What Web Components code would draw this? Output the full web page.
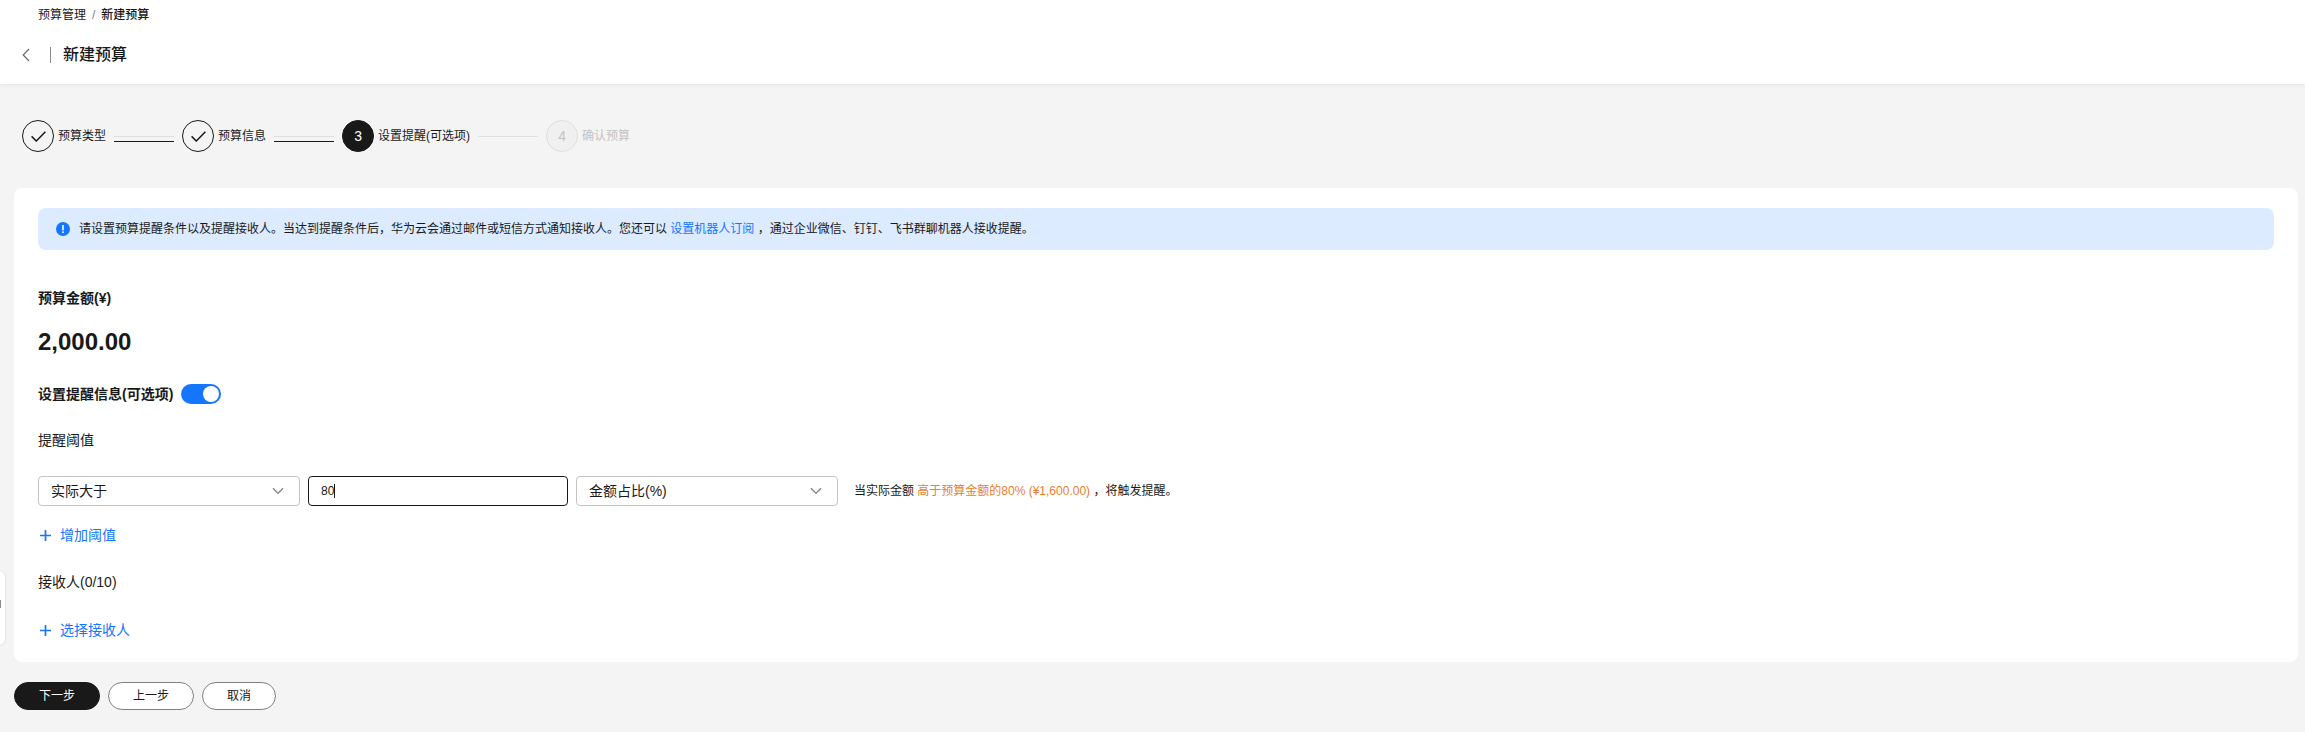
<!DOCTYPE html>
<html lang="zh-CN">
<head>
<meta charset="utf-8">
<title>新建预算</title>
<style>
  html, body { margin: 0; background: #f4f4f4; }
  body {
    font: 12px/20px "Liberation Sans", "Noto Sans CJK SC", sans-serif;
    color: #191919;
    position: relative;
    min-height: 732px;
  }
</style>
</head>
<body>
<page-header crumb="预算管理" title-text="新建预算"></page-header>

<step-bar>
  <step-item state="done" connector="done">预算类型</step-item>
  <step-item state="done" connector="done">预算信息</step-item>
  <step-item state="active" num="3" connector="todo">设置提醒(可选项)</step-item>
  <step-item state="todo" num="4">确认预算</step-item>
</step-bar>

<form-card>
  <info-alert>
    请设置预算提醒条件以及提醒接收人。当达到提醒条件后，华为云会通过邮件或短信方式通知接收人。您还可以 <a-link>设置机器人订阅</a-link> ，通过企业微信、钉钉、飞书群聊机器人接收提醒。
  </info-alert>

  <form-row top="38" strong>预算金额(¥)</form-row>
  <form-row top="18" amount>2,000.00</form-row>
  <form-row top="26" strong>设置提醒信息(可选项)<switch-toggle slot="after"></switch-toggle></form-row>
  <form-row top="26">提醒阈值</form-row>

  <threshold-row>
    <select-box>实际大于</select-box>
    <text-box value="80"></text-box>
    <select-box>金额占比(%)</select-box>
    <span slot="hint">当实际金额 <em style="font-style:normal;color:#e8802f">高于预算金额的80% (¥1,600.00)</em> ，将触发提醒。</span>
  </threshold-row>

  <add-link top="19">增加阈值</add-link>
  <form-row top="27">接收人(0/10)</form-row>
  <add-link top="28">选择接收人</add-link>
</form-card>

<action-bar>
  <ui-btn variant="primary" width="86">下一步</ui-btn>
  <ui-btn width="86">上一步</ui-btn>
  <ui-btn width="74">取消</ui-btn>
</action-bar>

<side-tab></side-tab>

<script>
// kleine helper: shadow root met stijl + markup
function mount(el, html) {
  el.attachShadow({ mode: 'open' });
  el.shadowRoot.innerHTML = html;
}

class PageHeader extends HTMLElement {
  connectedCallback() {
    mount(this, `
      <style>
        :host {
          display: block;
          height: 84px;
          background: #fff;
          box-shadow: 0 1px 4px rgba(0, 0, 0, 0.08);
          box-sizing: border-box;
          padding: 6px 0 0 22px;
        }
        .crumb { height: 18px; line-height: 18px; padding-left: 16px; display: flex; gap: 6px; }
        .crumb i { font-style: normal; color: #808080; }
        .crumb b { font-weight: 500; }
        .title { display: flex; align-items: center; height: 32px; margin-top: 15px; }
        svg { display: block; }
        .sep { width: 1px; height: 16px; background: #8a8a8a; margin: 0 12px 0 20px; }
        h1 { margin: 0; font-size: 16px; line-height: 32px; font-weight: 500; }
      </style>
      <div class="crumb"><span>${this.getAttribute('crumb')}</span><i>/</i><b>${this.getAttribute('title-text')}</b></div>
      <div class="title">
        <svg width="8" height="14" viewBox="0 0 8 14"><path d="M7 1 1.2 7 7 13" fill="none" stroke="#6b6b6b" stroke-width="1.2"/></svg>
        <span class="sep"></span>
        <h1>${this.getAttribute('title-text')}</h1>
      </div>`);
  }
}

class StepBar extends HTMLElement {
  connectedCallback() {
    mount(this, `
      <style>
        :host { display: flex; padding: 36px 0 0 22px; gap: 8px; }
      </style>
      <slot></slot>`);
  }
}

class StepItem extends HTMLElement {
  connectedCallback() {
    const state = this.getAttribute('state');
    const conn = this.getAttribute('connector');
    const mark = state === 'done'
      ? '<svg width="15" height="11" viewBox="0 0 15 11"><path d="M.6 5.4 5.3 10 14.4 .8" fill="none" stroke="#191919" stroke-width="1.5"/></svg>'
      : this.getAttribute('num');
    mount(this, `
      <style>
        :host { display: flex; height: 32px; gap: 8px; }
        .head { display: flex; align-items: center; gap: 4px; }
        .dot {
          width: 32px; height: 32px; box-sizing: border-box;
          border-radius: 50%;
          border: 1px solid #191919;
          display: flex; align-items: center; justify-content: center;
          font-size: 14px;
        }
        :host([state=active]) .dot { background: #191919; color: #fff; }
        :host([state=todo]) .dot { background: #f0f0f0; border-color: #dfdfdf; color: #c3c3c3; }
        :host([state=todo]) .label { color: #c3c3c3; }
        .label { white-space: nowrap; }
        .line { width: 60px; padding-top: 16px; }
        .line::before { content: ""; display: block; height: 1px; background: #dfdfdf; }
        .line.done::after { content: ""; display: block; height: 1px; margin-top: 4px; background: #191919; }
      </style>
      <div class="head"><span class="dot">${mark}</span><span class="label"><slot></slot></span></div>
      ${conn ? `<div class="line ${conn}"></div>` : ''}`);
  }
}

class FormCard extends HTMLElement {
  connectedCallback() {
    mount(this, `
      <style>
        :host {
          display: block;
          margin: 36px 7px 0 14px;
          padding: 20px 24px 22px;
          background: #fff;
          border-radius: 8px;
        }
      </style>
      <slot></slot>`);
  }
}

class InfoAlert extends HTMLElement {
  connectedCallback() {
    mount(this, `
      <style>
        :host {
          display: flex;
          align-items: center;
          height: 42px;
          padding: 0 18px;
          gap: 9px;
          background: #dcebff;
          border-radius: 8px;
        }
        svg { flex: none; }
      </style>
      <svg width="14" height="14" viewBox="0 0 14 14">
        <circle cx="7" cy="7" r="7" fill="#1476ff"/>
        <rect x="6.2" y="3" width="1.6" height="5.4" fill="#fff"/>
        <rect x="6.2" y="9.4" width="1.6" height="1.6" fill="#fff"/>
      </svg>
      <span><slot></slot></span>`);
  }
}

class ALink extends HTMLElement {
  connectedCallback() {
    mount(this, `<style>:host { color: #1476ff; }</style><slot></slot>`);
  }
}

class FormRow extends HTMLElement {
  connectedCallback() {
    mount(this, `
      <style>
        :host { display: flex; align-items: center; gap: 8px; height: 20px; font-size: 14px; margin-top: ${this.getAttribute('top')}px; }
        :host([strong]) { font-weight: 600; }
        :host([amount]) { font-size: 24px; font-weight: 700; height: 32px; line-height: 32px; }
      </style>
      <span><slot></slot></span><slot name="after"></slot>`);
  }
}

class SwitchToggle extends HTMLElement {
  connectedCallback() {
    mount(this, `
      <style>
        :host {
          display: flex; justify-content: flex-end; align-items: center;
          width: 40px; height: 20px; box-sizing: border-box;
          padding-right: 2px;
          background: #1476ff; border-radius: 10px;
        }
        i { width: 16px; height: 16px; border-radius: 50%; background: #fff; }
      </style>
      <i></i>`);
  }
}

class ThresholdRow extends HTMLElement {
  connectedCallback() {
    mount(this, `
      <style>
        :host { display: flex; align-items: center; gap: 8px; margin-top: 26px; }
        .hint { margin-left: 8px; white-space: nowrap; }
      </style>
      <slot></slot>
      <span class="hint"><slot name="hint"></slot></span>`);
  }
}

class SelectBox extends HTMLElement {
  connectedCallback() {
    mount(this, `
      <style>
        :host {
          display: flex; align-items: center; justify-content: space-between;
          width: 262px; height: 30px; box-sizing: border-box;
          padding: 0 15px 0 12px;
          border: 1px solid #c3c3c3; border-radius: 4px;
          background: #fff;
          font-size: 14px;
        }
      </style>
      <span><slot></slot></span>
      <svg width="12" height="8" viewBox="0 0 12 8"><path d="M1 1.2 6 6.4 11 1.2" fill="none" stroke="#808080" stroke-width="1.3"/></svg>`);
  }
}

class TextBox extends HTMLElement {
  connectedCallback() {
    mount(this, `
      <style>
        :host {
          display: flex; align-items: center;
          width: 260px; height: 30px; box-sizing: border-box;
          padding: 0 12px;
          border: 1px solid #191919; border-radius: 4px;
          background: #fff;
        }
        i { width: 1px; height: 14px; background: #191919; }
      </style>
      <span>${this.getAttribute('value')}</span><i></i>`);
  }
}

class AddLink extends HTMLElement {
  connectedCallback() {
    mount(this, `
      <style>
        :host {
          display: flex; align-items: center; gap: 9px;
          height: 20px; padding-left: 2px;
          margin-top: ${this.getAttribute('top')}px;
          color: #1476ff;
          font-size: 14px;
        }
      </style>
      <svg width="11" height="11" viewBox="0 0 11 11"><path d="M5.5 0V11M0 5.5H11" stroke="#1476ff" stroke-width="1.7"/></svg>
      <span><slot></slot></span>`);
  }
}

class ActionBar extends HTMLElement {
  connectedCallback() {
    mount(this, `
      <style>:host { display: flex; gap: 8px; margin: 20px 0 0 14px; }</style>
      <slot></slot>`);
  }
}

class UiBtn extends HTMLElement {
  connectedCallback() {
    mount(this, `
      <style>
        :host {
          display: flex; align-items: center; justify-content: center;
          width: ${this.getAttribute('width')}px; height: 28px; box-sizing: border-box;
          border: 1px solid #808080; border-radius: 14px;
          background: #fff;
        }
        :host([variant=primary]) { background: #191919; border-color: #191919; color: #fff; }
      </style>
      <slot></slot>`);
  }
}

// inklapbaar lipje aan de linkerrand, ligt over de pagina heen
class SideTab extends HTMLElement {
  connectedCallback() {
    mount(this, `
      <style>
        :host {
          position: absolute; left: -1px; top: 570px;
          width: 7px; height: 76px; box-sizing: border-box;
          background: #fff;
          border: 1px solid #e6e6e6; border-radius: 0 8px 8px 0;
          display: flex; align-items: center;
        }
        i { display: block; width: 1px; height: 8px; background: #8a8a8a; margin-bottom: 8px; }
      </style>
      <i></i>`);
  }
}

customElements.define('page-header', PageHeader);
customElements.define('step-bar', StepBar);
customElements.define('step-item', StepItem);
customElements.define('form-card', FormCard);
customElements.define('info-alert', InfoAlert);
customElements.define('a-link', ALink);
customElements.define('form-row', FormRow);
customElements.define('switch-toggle', SwitchToggle);
customElements.define('threshold-row', ThresholdRow);
customElements.define('select-box', SelectBox);
customElements.define('text-box', TextBox);
customElements.define('add-link', AddLink);
customElements.define('action-bar', ActionBar);
customElements.define('ui-btn', UiBtn);
customElements.define('side-tab', SideTab);
</script>
</body>
</html>
